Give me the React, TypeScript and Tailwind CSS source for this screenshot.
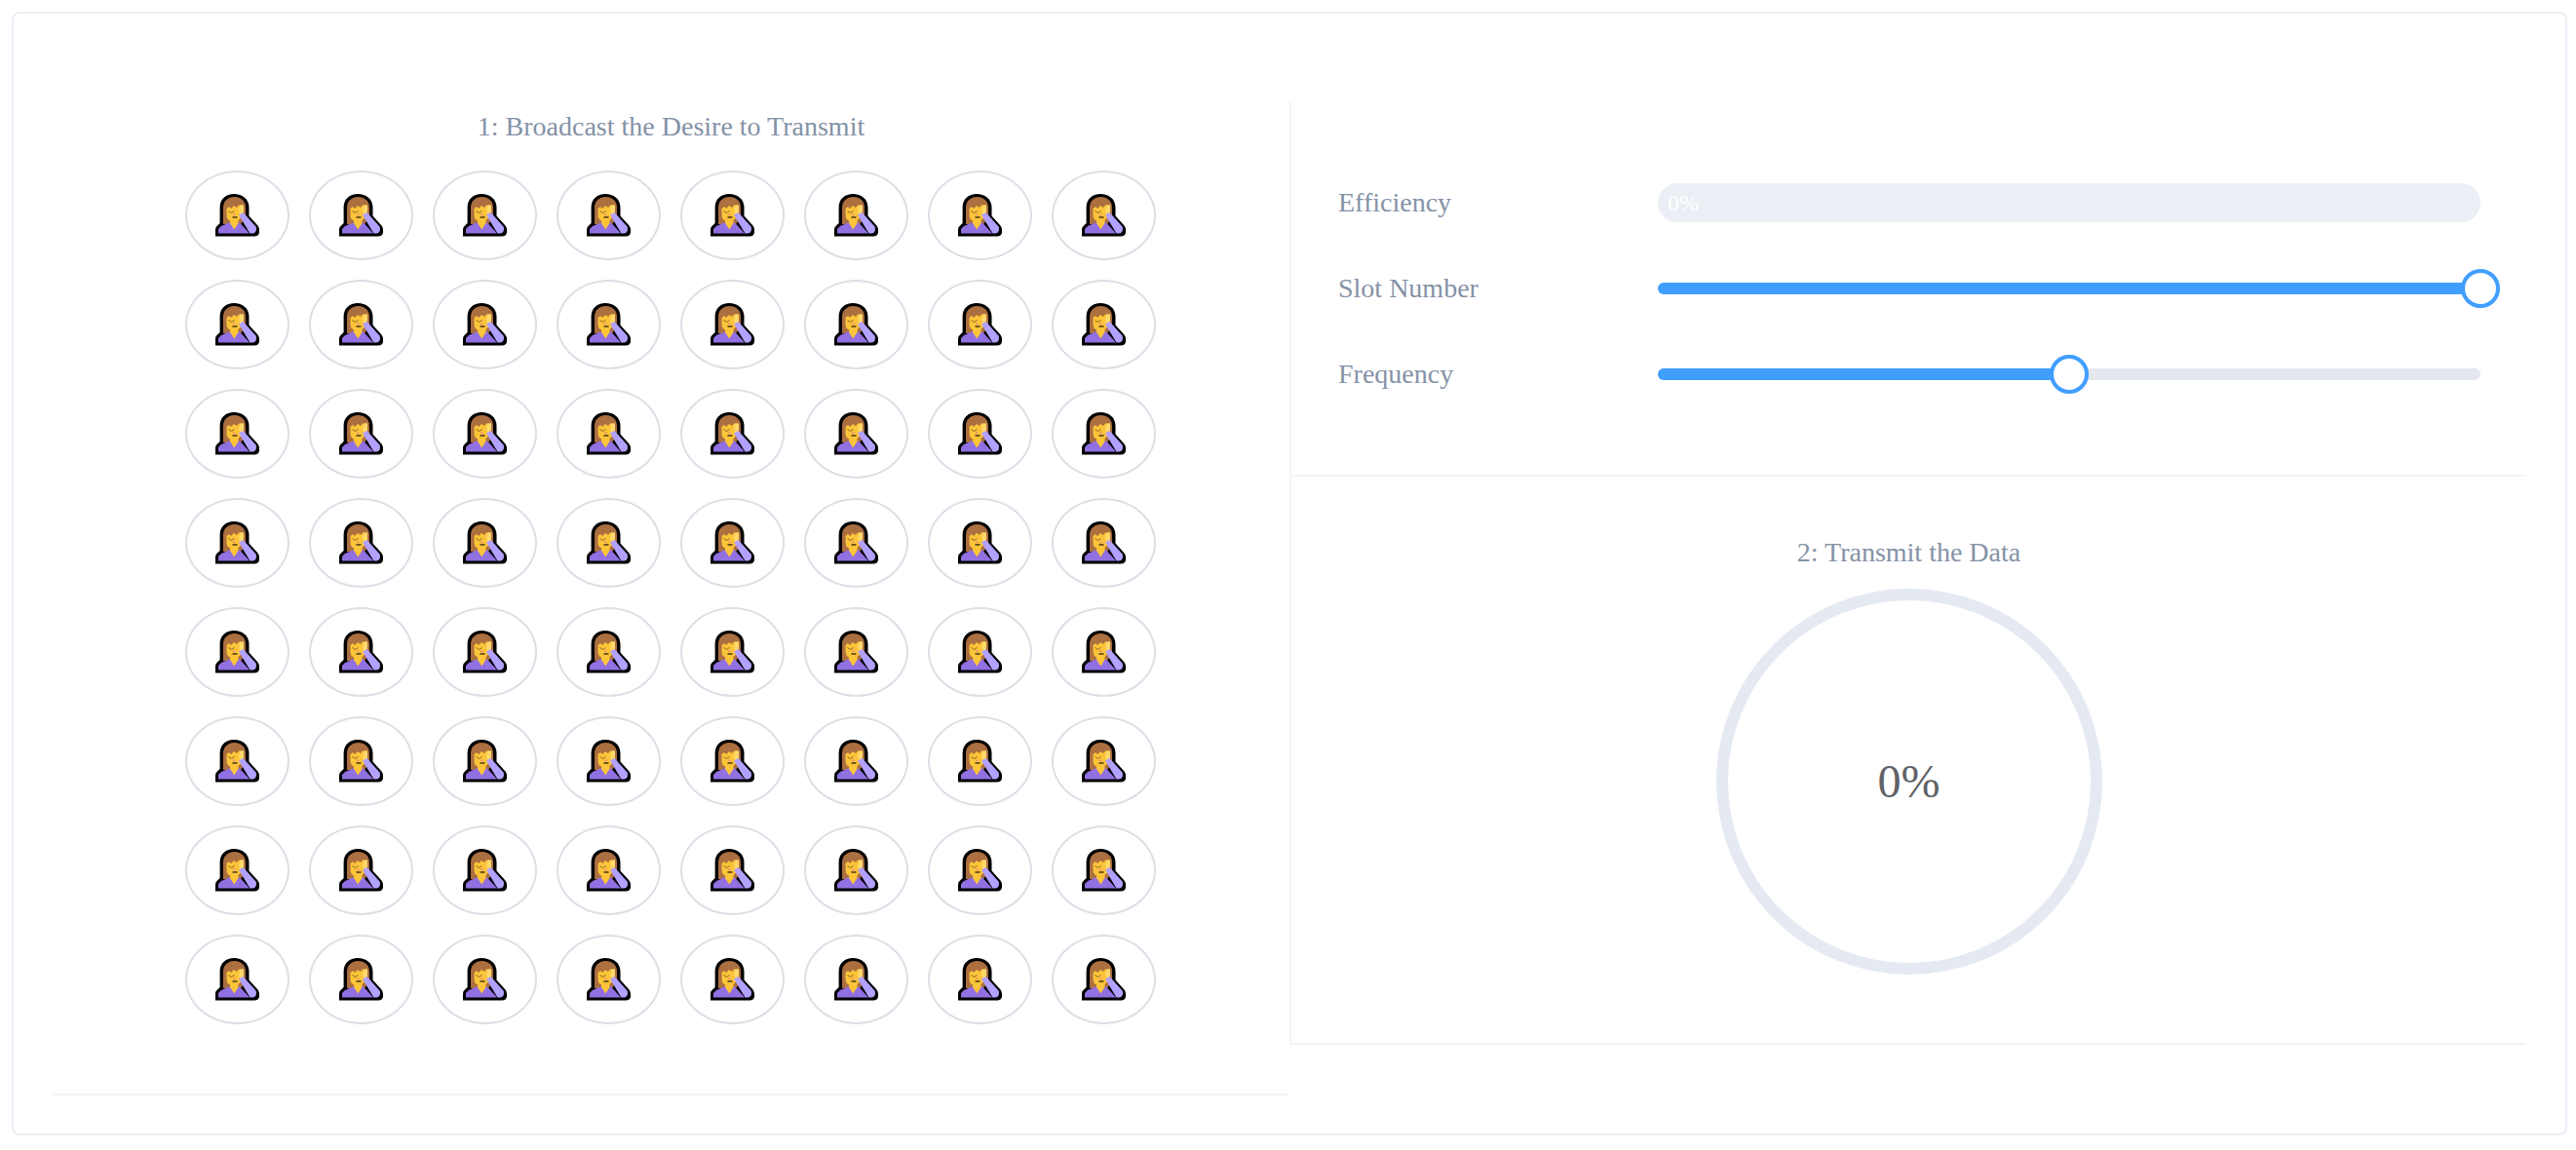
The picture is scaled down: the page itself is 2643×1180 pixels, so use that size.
import React from 'react';

const slots = Array.from({ length: 64 }, (_, i) => i);

// Facepalm emoji, there is no colour emoji font in the sandbox
const Facepalm = () => (
    <svg width="45" height="44" viewBox="0 0 45 44" className="block">
        {/* outline */}
        <path d="M0 43.5V36.5Q0 34 2 32.5L4.6 30V14C4.6 5 11 0 19 0C27.5 0 34.5 5 34.5 14V22.5L43.5 32.5Q45 34.5 45 37V39.5Q44.5 43.5 40 43.5Z" fill="#000" />
        {/* hair */}
        <path d="M8 31V14C8 7 13 3 19.5 3C26 3 31 7 31 14V24L26 31Z" fill="#ab6f40" />
        {/* face */}
        <path d="M11.5 21V15L14 13L16 15L19 12L22 14L24 11.5H28.5V22L23 27.5H16Q11.5 27 11.5 21Z" fill="#fcc439" />
        {/* hand */}
        <path d="M24 17L25.5 11.5H29V19L25.5 22Z" fill="#fdd86a" />
        {/* body */}
        <path d="M3 40.5V36L6 33L14 29.5H25L35 40.5Z" fill="#9170e2" />
        {/* neck */}
        <path d="M15 26.5H23.5V30L19.3 36.5L15 30Z" fill="#fcc439" />
        {/* arm */}
        <path d="M24 21.5L28.5 19L41.5 33.5Q42.3 35 41.8 37.5Q41 40.5 38 40.5H35.5Z" fill="#b3a1ff" />
        {/* eye, nose, mouth */}
        <path d="M13.5 17.5L16.5 19.5L19.5 17.5" fill="none" stroke="#7a5a20" strokeWidth="0.9" />
        <rect x="18" y="20.5" width="2.5" height="1.5" fill="#f0907f" />
        <rect x="17.5" y="23.2" width="5" height="1.5" fill="#4a3815" />
    </svg>
);

const Slider = ({ label, thumb, fill }: { label: string; thumb: string; fill: string }) => (
    <div className="flex items-center h-10 mt-12">
        <span className="w-[328px] text-[28px] text-[#8492a6]">{label}</span>
        <div className="relative w-[844px] h-3 rounded-md bg-[#e4e7ed]">
            <div className={`h-3 rounded-md bg-[#409eff] ${fill}`} />
            <div className={`absolute top-1/2 ${thumb} -translate-x-1/2 -translate-y-1/2 w-10 h-10 rounded-full border-4 border-[#409eff] bg-white`} />
        </div>
    </div>
);

export default function App() {
    return (
        <div className="pt-3 pl-3 pr-[9px] pb-[15px] bg-white font-['Liberation_Serif',serif]">
            <div className="flex items-start h-[1153px] pt-[90px] pl-10 pr-10 rounded-lg border-2 border-[#ebeef5]">
                {/* Left: slot grid */}
                <div className="w-[1270px] h-[1020px] border-b-2 border-[#f2f4f8] flex flex-col items-center">
                    <h2 className="mt-[9px] text-[28px] leading-[34px] font-normal text-[#8492a6]">1: Broadcast the Desire to Transmit</h2>
                    <div className="mt-7 mr-0.5 grid grid-cols-[repeat(8,107px)] gap-x-5 gap-y-5">
                        {slots.map(i => (
                            <div key={i} className="w-[107px] h-[92px] flex items-center justify-center rounded-[50%] border-2 border-[#dcdfe6]">
                                <Facepalm />
                            </div>
                        ))}
                    </div>
                </div>

                {/* Right: sliders and transmit progress */}
                <div className="w-[1270px] h-[968px] border-l-2 border-b-2 border-[#f2f4f8]">
                    <div className="h-[385px] pl-12 pt-9 border-b-2 border-[#f2f4f8]">
                        <div className="flex items-center h-10 mt-12">
                            <span className="w-[328px] text-[28px] text-[#8492a6]">Efficiency</span>
                            <div className="w-[844px] h-10 pl-2.5 rounded-[20px] bg-[#ebeef5] text-2xl leading-10 text-white">0%</div>
                        </div>
                        <Slider label="Slot Number" fill="w-full" thumb="left-full" />
                        <Slider label="Frequency" fill="w-1/2" thumb="left-1/2" />
                    </div>
                    <div className="flex flex-col items-center">
                        <h2 className="mt-[61px] text-[28px] leading-[34px] font-normal text-[#8492a6]">2: Transmit the Data</h2>
                        <div className="mt-5 w-[396px] h-[396px] flex items-center justify-center rounded-full border-[12px] border-[#e5e9f2] text-[48px] text-[#606266]">0%</div>
                    </div>
                </div>
            </div>
        </div>
    );
}
